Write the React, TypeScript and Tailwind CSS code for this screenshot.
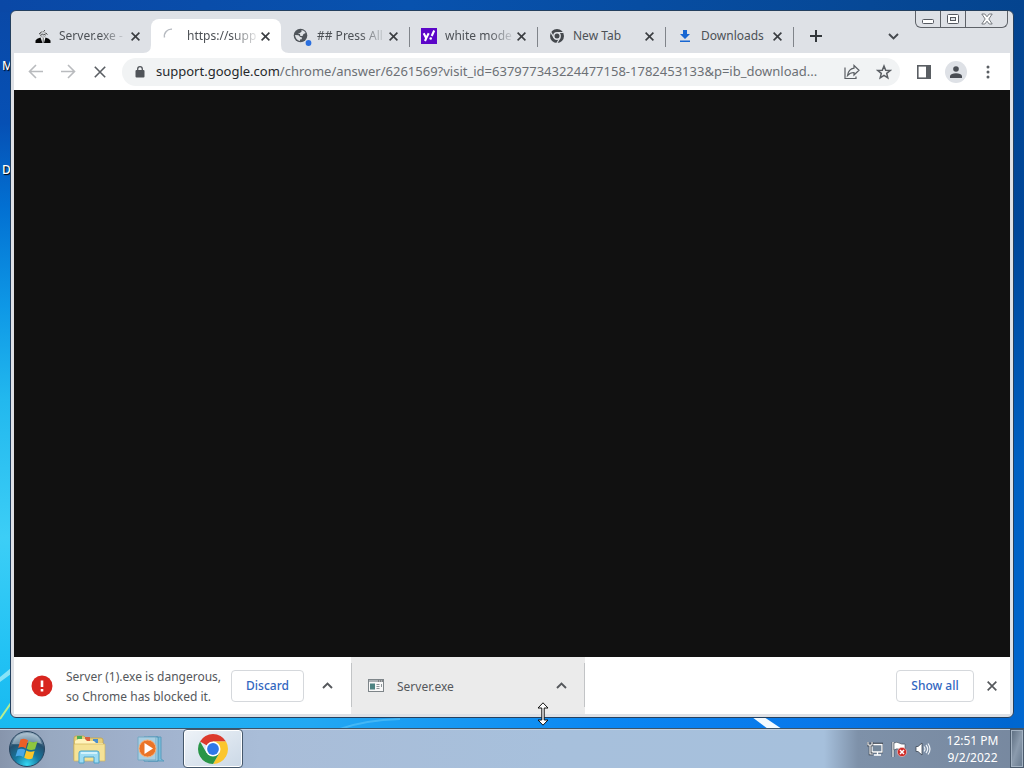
import type { ReactNode } from 'react';

const FADE = '[mask-image:linear-gradient(to_right,black_65%,rgb(0_0_0/0.15))]';

function Wallpaper() {
  return (
    <svg className="absolute inset-0 h-full w-full" viewBox="0 0 1024 768" preserveAspectRatio="none" aria-hidden="true">
      <defs>
        <linearGradient id="wl" x1="0" y1="0" x2="0" y2="1">
          <stop offset="0" stopColor="#0a48a6" />
          <stop offset="0.16" stopColor="#0650b4" />
          <stop offset="0.27" stopColor="#0270d2" />
          <stop offset="0.4" stopColor="#0e98e6" />
          <stop offset="0.52" stopColor="#22b8ee" />
          <stop offset="0.7" stopColor="#3ccef6" />
          <stop offset="0.85" stopColor="#22c2f4" />
          <stop offset="1" stopColor="#12b4ee" />
        </linearGradient>
        <linearGradient id="wr" x1="0" y1="0" x2="0" y2="1">
          <stop offset="0" stopColor="#04448f" />
          <stop offset="0.3" stopColor="#00479a" />
          <stop offset="0.6" stopColor="#0060c2" />
          <stop offset="1" stopColor="#0068d2" />
        </linearGradient>
        <linearGradient id="wb" x1="0" y1="0" x2="1" y2="0">
          <stop offset="0" stopColor="#18bdf3" />
          <stop offset="0.3" stopColor="#22a8f2" />
          <stop offset="0.6" stopColor="#0a86f2" />
          <stop offset="0.8" stopColor="#0878ea" />
          <stop offset="1" stopColor="#0066d0" />
        </linearGradient>
        <linearGradient id="wt" x1="0" y1="0" x2="1" y2="0">
          <stop offset="0" stopColor="#0a48a6" />
          <stop offset="0.4" stopColor="#0852ae" />
          <stop offset="0.85" stopColor="#064896" />
          <stop offset="1" stopColor="#04448f" />
        </linearGradient>
      </defs>
      <rect width="512" height="768" fill="url(#wl)" />
      <rect x="512" width="512" height="768" fill="url(#wr)" />
      <rect width="1024" height="12" fill="url(#wt)" />
      <rect x="10" y="714" width="1003" height="54" fill="url(#wb)" />
      <path d="M0 677l11-9v6l-11 8z" fill="#a4ecf8" opacity="0.8" />
      <path d="M0 719l11-16" stroke="#b8ee90" strokeWidth="2" />
      <path d="M752 717l12 0 18 12h-14z" fill="#f2faff" />
      <path d="M340 729q25-9 60-10" stroke="#5cc4f8" strokeWidth="2" fill="none" opacity="0.6" />
    </svg>
  );
}

function Cross({ size = 'size-[9px]', width = 1.6 }: { size?: string; width?: number }) {
  return (
    <svg className={size} viewBox="0 0 9 9" stroke="currentColor" strokeWidth={width} aria-hidden="true">
      <path d="M0.6 0.6l7.8 7.8M8.4 0.6L0.6 8.4" />
    </svg>
  );
}

function Chevron({ up = false }: { up?: boolean }) {
  return (
    <svg className="h-[7px] w-[11px]" viewBox="0 0 11 7" fill="none" stroke="currentColor" strokeWidth="1.900" aria-hidden="true">
      <path d={up ? 'M1 6l4.500-4.500L10 6' : 'M1 1l4.500 4.500L10 1'} />
    </svg>
  );
}

const ServerIcon = (
  <svg className="size-4" viewBox="0 0 16 16" aria-hidden="true">
    <path d="M.5 15v-2.500q1-2 5-3L7.500 15zM9 15l1.500-5.500q4 1 5 3V15z" fill="#050505" />
    <path d="M6.500 9.500L8.200 14l1.800-4.500z" fill="#fff" />
    <path d="M5 6.500q0-3 3-3t3 3q-.5 2.500-3 3-2.500-.5-3-3z" fill="#d0d3d7" stroke="#888" strokeWidth=".6" />
    <path d="M4 6l2.500-2M8.500 3.500L10 2M11 5l1.500 1.500M5.500 7.500l2-1.500 1 1 2-1M8.200 10v5" stroke="#444" strokeWidth=".9" fill="none" />
  </svg>
);
const SpinnerIcon = (
  <svg className="size-4" viewBox="0 0 16 16" fill="none" aria-hidden="true">
    <path d="M1.500 9.500A7 7 0 0 1 9 1.200" stroke="#b6bac0" strokeWidth="1.400" />
  </svg>
);
const GlobeIcon = (
  <svg className="h-[19px] w-[19px]" viewBox="0 0 19 19" aria-hidden="true">
    <circle cx="7.500" cy="8.500" r="6.800" fill="#50555b" />
    <path d="M8.500 3q3 .3 4.300 3l-2.300 1-1 2H7.300L7 7 4.800 6.500l2-.5 1.700-1.300zM2 8l3.500.3 1.700 1.700 1.800.6-.3 1.600-1.700.4v1.400Q2.500 13 2 8z" fill="#dfe2e6" />
    <circle cx="15.500" cy="16" r="2.900" fill="#2a6fdf" />
  </svg>
);
const YahooIcon = (
  <svg className="size-4" viewBox="0 0 16 16" aria-hidden="true">
    <path d="M0 0h16v16H0z" fill="#5c06c8" />
    <path d="M2.700 5.200l2.500 5L7.700 5.200M5.300 10L4 13M13.200 2.500L10.700 8" stroke="#fff" strokeWidth="2.100" fill="none" />
    <circle cx="9.700" cy="10.500" r="1.300" fill="#fff" />
  </svg>
);
const NewTabIcon = (
  <svg className="size-4" viewBox="0 0 16 16" aria-hidden="true">
    <circle cx="8" cy="8" r="7" fill="#44484d" />
    <circle cx="8" cy="8" r="3.200" fill="#44484d" stroke="#dee1e6" strokeWidth="1.400" />
    <path d="M8 4.500h6.600M5 9.700L1.700 4M11 9.700L7.800 15.300" stroke="#dee1e6" strokeWidth="1.200" />
  </svg>
);
const DownloadIcon = (
  <svg className="size-4" viewBox="0 0 16 16" fill="#1766d2" aria-hidden="true">
    <path d="M6 2h4v4h3L8 11 3 6h3zM3 12.500h10V14H3z" />
  </svg>
);

interface TabData {
  icon: ReactNode;
  title: string;
  fade?: boolean;
  active?: boolean;
  line?: boolean;
}

const tabs: TabData[] = [
  { icon: ServerIcon, title: 'Server.exe -', fade: true },
  { icon: SpinnerIcon, title: 'https://supp', fade: true, active: true },
  { icon: GlobeIcon, title: '## Press All', fade: true, line: true },
  { icon: YahooIcon, title: 'white mode', fade: true, line: true },
  { icon: NewTabIcon, title: 'New Tab', line: true },
  { icon: DownloadIcon, title: 'Downloads', line: true },
];

function Tab({ icon, title, fade, active, line }: TabData) {
  return (
    <div
      className={`relative flex h-[34px] shrink-0 items-center text-xs ${
        active ? 'w-[130px] rounded-t-lg bg-white' : 'w-[128px]'
      }`}
    >
      {active && (
        <>
          <svg className="absolute bottom-0 -left-2 size-2" viewBox="0 0 8 8" fill="#fff" aria-hidden="true">
            <path d="M8 0v8H0q8 0 8-8z" />
          </svg>
          <svg className="absolute -right-2 bottom-0 size-2" viewBox="0 0 8 8" fill="#fff" aria-hidden="true">
            <path d="M0 0v8h8q-8 0-8-8z" />
          </svg>
        </>
      )}
      <button role="tab" aria-selected={!!active} className="flex h-full min-w-0 flex-1 items-center pl-3">
        <span className="flex w-6 shrink-0 items-center">{icon}</span>
        <span className={`whitespace-nowrap ${fade ? FADE : ''}`}>{title}</span>
      </button>
      <button aria-label={`Close ${title}`} className="mr-1 flex h-full w-6 items-center justify-center text-[#3a3d41]">
        <Cross />
      </button>
      {line && <span className="absolute top-2 -right-px h-5 w-px bg-[#80848a]" />}
    </div>
  );
}

function WindowControls() {
  const cell = 'flex h-full items-center justify-center border-[#5e6268]';
  return (
    <div className="flex h-[17px] rounded-b-md border border-t-0 border-[#5e6268]">
      <button aria-label="Minimize" className={`${cell} w-[25px] border-r`}>
        <svg className="h-3 w-3" viewBox="0 0 12 12" aria-hidden="true">
          <rect x=".5" y="6.500" width="11" height="4" rx="1" fill="#fff" stroke="#555960" />
        </svg>
      </button>
      <button aria-label="Restore" className={`${cell} w-[25px] border-r`}>
        <svg className="h-3 w-3" viewBox="0 0 12 12" aria-hidden="true">
          <rect x=".5" y="1.500" width="11" height="9" rx="1" fill="#fff" stroke="#555960" />
          <rect x="3.500" y="4.500" width="5" height="3" fill="#dee1e6" stroke="#555960" />
        </svg>
      </button>
      <button aria-label="Close window" className={`${cell} w-[41px]`}>
        <svg className="h-3 w-3" viewBox="0 0 12 12" aria-hidden="true">
          <path d="M.8 1h3L6 3.800 8.200 1h3L7.800 6l3.400 5h-3L6 8.200 3.800 11h-3l3.400-5z" fill="#fff" stroke="#6a6e74" strokeWidth=".9" />
        </svg>
      </button>
    </div>
  );
}

function Toolbar() {
  return (
    <div className="flex h-[37px] shrink-0 items-center bg-white px-1.5 text-[#5a5e63]">
      <button aria-label="Back" className="flex w-8 justify-center text-[#b9bbbe]">
        <svg className="size-4" viewBox="0 0 16 16" fill="none" stroke="currentColor" strokeWidth="1.600" aria-hidden="true">
          <path d="M15 7.500H2M8 1L1.500 7.500 8 14" />
        </svg>
      </button>
      <button aria-label="Forward" className="flex w-8 justify-center text-[#b9bbbe]">
        <svg className="size-4" viewBox="0 0 16 16" fill="none" stroke="currentColor" strokeWidth="1.600" aria-hidden="true">
          <path d="M1 7.500h13M8 1l6.500 6.500L8 14" />
        </svg>
      </button>
      <button aria-label="Stop" className="flex w-8 justify-center">
        <Cross size="size-3" width={1.2} />
      </button>
      <div className="ml-1.5 flex h-7 min-w-0 flex-1 items-center rounded-full bg-[#f1f3f4] pl-[13px]">
        <svg className="mr-[11px] h-3 w-2.5 shrink-0" viewBox="0 0 10 12" aria-hidden="true">
          <rect x="0.500" y="4" width="9" height="7.500" rx="1" fill="#505459" />
          <path d="M2.700 4.500V3a2.300 2.300 0 0 1 4.600 0v1.500" fill="none" stroke="#505459" strokeWidth="1.300" />
        </svg>
        <a
          href="#address"
          aria-label="Address"
          className="min-w-0 flex-1 overflow-hidden text-[13px] whitespace-nowrap text-[#6c7075]"
        >
          <span className="text-[#26292c]">support.google.com</span>
          /chrome/answer/6261569?visit_id=637977343224477158-1782453133&amp;p=ib_download...
        </a>
        <button aria-label="Share" className="flex w-8 shrink-0 justify-center">
          <svg className="size-4" viewBox="0 0 16 16" fill="none" stroke="currentColor" strokeWidth="1.200" aria-hidden="true">
            <path d="M1 3.500v11h11v-2" />
            <path d="M10 1.500l5 4.800-5 4.700V8.500q-4 0-6.500 3Q4.500 5 10 4.200z" />
          </svg>
        </button>
        <button aria-label="Bookmark" className="flex w-8 shrink-0 justify-center">
          <svg className="size-4" viewBox="0 0 16 16" fill="none" stroke="currentColor" strokeWidth="1.500" aria-hidden="true">
            <path d="M8 2l1.700 4.200 4.500.3-3.500 2.900 1.100 4.400L8 11.400l-3.800 2.400 1.100-4.400L1.800 6.500l4.500-.3z" />
          </svg>
        </button>
      </div>
      <button aria-label="Side panel" className="ml-2 flex w-8 justify-center">
        <svg className="size-4" viewBox="0 0 16 16" aria-hidden="true">
          <rect x="1.800" y="1.800" width="12.400" height="12.400" fill="#fff" stroke="currentColor" strokeWidth="1.600" />
          <path d="M10 2h4.500v12H10z" fill="currentColor" />
        </svg>
      </button>
      <button aria-label="Profile" className="flex w-8 justify-center">
        <span className="flex size-[22px] items-center justify-center rounded-full bg-[#dee1e6]">
          <svg className="size-3" viewBox="0 0 12 12" fill="#4a4e54" aria-hidden="true">
            <circle cx="6" cy="3" r="2.800" />
            <path d="M0 12V9.800Q1 7.200 6 7.200t6 2.600V12z" />
          </svg>
        </span>
      </button>
      <button aria-label="Menu" className="flex w-8 justify-center">
        <svg className="size-4" viewBox="0 0 16 16" fill="currentColor" aria-hidden="true">
          <circle cx="8" cy="3" r="1.500" />
          <circle cx="8" cy="8" r="1.500" />
          <circle cx="8" cy="13" r="1.500" />
        </svg>
      </button>
    </div>
  );
}

function DownloadShelf() {
  return (
    <div className="flex h-[57px] shrink-0 items-center bg-white text-xs text-[#55585c]">
      <div className="flex h-full w-[337px] shrink-0 items-center pl-[17px]">
        <svg className="mr-[13px] size-[22px] shrink-0" viewBox="0 0 22 22" aria-hidden="true">
          <circle cx="11" cy="11" r="10.500" fill="#d8261f" />
          <path d="M9.700 5.500h2.600V12H9.700zM9.700 14h2.600v2.500H9.700z" fill="#fff" />
        </svg>
        <p className="w-[165px] shrink-0 pt-0.5 leading-5 whitespace-nowrap">
          Server (1).exe is dangerous,
          <br />
          so Chrome has blocked it.
        </p>
        <button className="h-8 w-[73px] shrink-0 rounded border border-[#d5d8dc] font-medium text-[#3267bf]">Discard</button>
        <button aria-label="More options for Server (1).exe" className="flex h-8 flex-1 items-center justify-center">
          <Chevron up />
        </button>
      </div>
      <div className="relative flex h-full w-[234px] shrink-0 items-center bg-[#ebebeb] pr-[18px] pl-[17px]">
        <span className="absolute top-1.5 left-0 h-11 w-px bg-[#c2c4c6]" />
        <span className="absolute top-1.5 right-0 h-11 w-px bg-[#c2c4c6]" />
        <svg className="mr-[13px] h-[13px] w-4 shrink-0" viewBox="0 0 16 13" aria-hidden="true">
          <rect x=".5" y=".5" width="15" height="12" fill="#f8f8f8" stroke="#7e8589" />
          <path d="M1 1h14v2H1z" fill="#aab0b4" />
          <path d="M10 2h1M12 2h1M14 2h1" stroke="#555" />
          <path d="M2 4.500h5v6H2z" fill="#4d8382" />
          <path d="M8.500 5.500h3M8.500 7.500h3M8.500 9.500h3M13.500 5v3" stroke="#8d9498" />
        </svg>
        <span className="flex-1 pt-0.5">Server.exe</span>
        <button aria-label="More options for Server.exe">
          <Chevron up />
        </button>
      </div>
      <div className="flex flex-1 items-center justify-end">
        <button className="h-8 w-[78px] rounded border border-[#d5d8dc] font-medium text-[#3267bf]">Show all</button>
        <button aria-label="Close downloads bar" className="flex h-8 w-9 items-center justify-center text-[#55585c]">
          <Cross size="size-2.5" width={1.5} />
        </button>
      </div>
    </div>
  );
}

function StartOrb() {
  return (
    <svg className="size-[38px]" viewBox="0 0 38 38" aria-hidden="true">
      <defs>
        <radialGradient id="orb" cx="0.5" cy="0.95" r="0.9">
          <stop offset="0" stopColor="#35d8f4" />
          <stop offset="0.4" stopColor="#16789f" />
          <stop offset="0.75" stopColor="#24506f" />
          <stop offset="1" stopColor="#8aa4b8" />
        </radialGradient>
      </defs>
      <circle cx="19" cy="19" r="17.500" fill="url(#orb)" stroke="#27445f" />
      <path d="M4 14Q7 3 19 3t15 11q-7-3-15-1T4 14z" fill="#dbe8f2" opacity=".45" />
      <path d="M12.500 9.500q4-2 7.500.8l-2.300 8.200q-3.500-2.500-7.500-.5z" fill="#ea5f27" />
      <path d="M21 11q4 2.500 8.500.3l-2.500 8q-4.500 1.700-8.300-.5z" fill="#8ec63f" />
      <path d="M9.700 19.500q4-1.800 7.600.5L15.200 27q-3.500-2.200-7.700-.5z" fill="#48a7e8" />
      <path d="M18.300 20.500q4 2.200 8.300.5l-2.200 7.500q-4.300 1.700-8.200-.7z" fill="#fac62b" />
    </svg>
  );
}

function ExplorerIcon() {
  return (
    <svg className="h-8 w-[34px]" viewBox="0 0 34 32" aria-hidden="true">
      <path d="M2 5q0-2 2-2h8l2 2h15q2 0 2 2v20H2z" fill="#e8cf78" stroke="#c2a34d" strokeWidth=".8" />
      <path d="M5 3h5v5H5z" fill="#4bae55" />
      <path d="M13 4h5v5h-5z" fill="#d8603c" />
      <path d="M21 6h5v4h-5z" fill="#4a8fce" />
      <path d="M6 6h7l2 2h7l2 2h7v5H3V8z" fill="#fff3bb" />
      <path d="M2 11h31v17H2z" fill="#f5e296" stroke="#d1b55c" strokeWidth=".7" />
      <path d="M7 30V20q0-2 2-2h16q2 0 2 2v10h-5v-6H12v6z" fill="#9ddcf3" stroke="#4aa3cb" />
      <path d="M9 20h16" stroke="#e5faff" strokeWidth="1.500" />
    </svg>
  );
}

function MediaPlayerIcon() {
  return (
    <svg className="h-7 w-[30px]" viewBox="0 0 30 28" aria-hidden="true">
      <path d="M12 2h13v22l3 2H12z" fill="#78bddb" stroke="#5d9cbc" />
      <path d="M8 2h14v24H8z" fill="#b8e2ef" stroke="#468fb4" />
      <path d="M2 2h18v23H2z" fill="#a9cfe2" stroke="#75a9c4" />
      <circle cx="11.500" cy="13.500" r="8.500" fill="#ea7427" stroke="#f5b27d" />
      <path d="M8.500 8v11l8.500-5.500z" fill="#fff" />
    </svg>
  );
}

function ChromeIcon() {
  return (
    <svg className="size-[30px]" viewBox="0 0 30 30" aria-hidden="true">
      <path d="M15 15L2.010 7.500A15 15 0 0 1 27.990 7.500H15z" fill="#dc3a2d" />
      <path d="M15 7.500h12.990A15 15 0 0 1 15 30l6.500-11.250z" fill="#fbc62d" />
      <path d="M2.010 7.500A15 15 0 0 0 15 30l6.500-11.250L15 15l-6.500 3.750z" fill="#299547" />
      <circle cx="15" cy="15" r="7.500" fill="#fff" />
      <circle cx="15" cy="15" r="5.900" fill="#3078e8" />
    </svg>
  );
}

function Taskbar() {
  return (
    <footer className="relative flex h-10 shrink-0 items-stretch border-t border-[#3d5468] bg-[linear-gradient(to_right,#8795ac_0px,#98a9c1_50px,#9fb0cb_130px,#a9bdd8_260px,#a7c0dc_560px,#a6c0dc_calc(100%_-_200px),#7e91a9_calc(100%_-_166px),#77889f_100%)] inset-shadow-[0_1px_0_#c5d3e3]">
      <button aria-label="Start" className="flex w-[54px] items-center justify-center">
        <StartOrb />
      </button>
      <button aria-label="File Explorer" className="flex w-[70px] items-center justify-center">
        <ExplorerIcon />
      </button>
      <button aria-label="Media Player" className="flex w-[54px] items-center justify-center">
        <MediaPlayerIcon />
      </button>
      <button
        aria-label="Google Chrome"
        className="ml-[5px] flex w-[60px] items-center justify-center rounded-sm border border-[#45586c] bg-linear-to-br from-[#eef3f8] to-[#cbd8e6] inset-ring inset-ring-white"
      >
        <ChromeIcon />
      </button>
      <div className="flex-1" />
      <div className="mr-1 flex items-center gap-2">
        <button aria-label="Network">
          <svg className="size-4" viewBox="0 0 16 16" aria-hidden="true">
            <path d="M5 3h10v8H5z" fill="#6f8093" stroke="#28313c" strokeWidth="2.600" />
            <path d="M5 3.500h10v7.500H5zM7 14h7M10.500 11v3" fill="#74879b" stroke="#fff" strokeWidth="1.300" />
            <path d="M1 1v3h4V1M3 4v9h3" fill="none" stroke="#28313c" strokeWidth="2.400" />
            <path d="M1 1v3h4V1M3 4v9h3" fill="none" stroke="#fff" strokeWidth="1.200" />
          </svg>
        </button>
        <button aria-label="Action Center">
          <svg className="size-4" viewBox="0 0 16 16" aria-hidden="true">
            <path d="M2 1v15" stroke="#28313c" strokeWidth="2.500" />
            <path d="M2 1v15" stroke="#fff" strokeWidth="1.400" />
            <path d="M3 2q3-1.500 5 0t6 1v6q-4 .5-6-.7T3 9z" fill="#fff" stroke="#3c4654" strokeWidth=".6" />
            <circle cx="11" cy="11" r="4.600" fill="#cf2b27" stroke="#f3c9c6" strokeWidth=".6" />
            <path d="M9 9l4 4M13 9l-4 4" stroke="#fff" strokeWidth="1.500" />
          </svg>
        </button>
        <button aria-label="Volume">
          <svg className="size-4" viewBox="0 0 16 16" fill="none" aria-hidden="true">
            <path d="M1 5.500h2L7 2v12l-4-3.500H1z" fill="#fff" stroke="#3c4654" strokeWidth=".8" />
            <path d="M9 5.500q2 2.500 0 5M11 4q3.300 4 0 8M13 2.500q4 5.500 0 11" stroke="#eef3f8" strokeWidth="1.200" />
          </svg>
        </button>
      </div>
      <time className="w-[75px] pt-[3px] text-center text-xs leading-[17px] text-white" dateTime="2022-09-02T12:51">
        12:51 PM
        <br />
        9/2/2022
      </time>
      <button
        aria-label="Show desktop"
        className="w-[14px] border border-[#4a5a6c] bg-linear-to-br from-[#5b6c7f] via-[#8b9bad] to-[#66788c] inset-ring inset-ring-[#a3b2c2]"
      />
    </footer>
  );
}

export default function App() {
  return (
    <div className="relative flex min-h-screen flex-col overflow-hidden font-['Noto_Sans','Open_Sans',sans-serif] text-[#4d5156]">
      <Wallpaper />
      <span className="absolute top-[58px] left-0.5 text-xs font-medium text-white [text-shadow:1px_1px_1px_#000]">M</span>
      <span className="absolute top-[162px] left-0.5 text-xs font-medium text-white [text-shadow:1px_1px_1px_#000]">D</span>

      <main className="relative flex flex-1 flex-col p-2.5">
        <section className="flex flex-1 flex-col rounded-md border border-[#24405f] bg-[#dee1e6] px-[3px] pb-[3px]">
          <header className="flex h-[42px] shrink-0 items-end pl-[9px]">
            <div role="tablist" className="flex">
              {tabs.map((tab) => (
                <Tab key={tab.title} {...tab} />
              ))}
            </div>
            <button aria-label="New tab" className="flex h-[34px] w-[46px] items-center justify-center text-[#33373b]">
              <svg className="size-3" viewBox="0 0 12 12" stroke="currentColor" strokeWidth="2" aria-hidden="true">
                <path d="M6 0v12M0 6h12" />
              </svg>
            </button>
            <div className="mr-0.5 flex flex-1 self-stretch">
              <button aria-label="Search tabs" className="ml-auto flex h-[34px] w-8 items-center justify-center self-end text-[#45494e]">
                <Chevron />
              </button>
              <div className="ml-1.5">
                <WindowControls />
              </div>
            </div>
          </header>
          <Toolbar />
          <div className="min-h-[200px] flex-1 bg-[#111111]" />
          <DownloadShelf />
        </section>
      </main>

      <Taskbar />

      <svg className="absolute top-[702px] left-[537px] h-6 w-3" viewBox="0 0 12 24" aria-hidden="true">
        <path d="M6 .8l5 5.200H7.200v12H11L6 23.200 1 18h3.800V6H1z" fill="#fff" stroke="#111" />
      </svg>
    </div>
  );
}
